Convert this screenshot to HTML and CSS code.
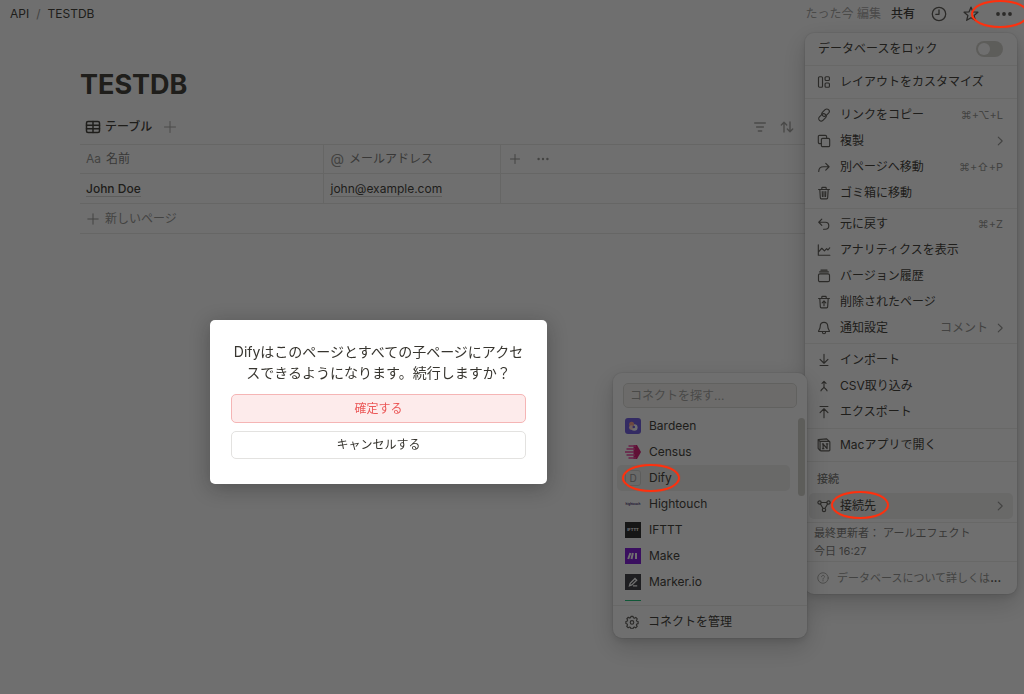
FILE: index.html
```html
<!DOCTYPE html>
<html lang="ja">
<head>
<meta charset="utf-8">
<meta name="viewport" content="width=device-width, initial-scale=1">
<title>TESTDB</title>
<link rel="stylesheet" href="styles.css">
</head>
<body>
<div class="app">
  <header class="topbar">
    <nav class="crumbs">
      <a href="#">API</a><span class="crumbs__sep">/</span><a href="#">TESTDB</a>
    </nav>
    <div class="topbar__actions">
      <span class="topbar__edited">たった今 編集</span>
      <button class="topbar__share">共有</button>
      <button class="icon-btn" aria-label="更新履歴"><svg class="icon" viewBox="0 0 16 16"><circle cx="8" cy="8" r="6.7"/><path d="M8 3.8V8.3H4.8"/></svg></button>
      <button class="icon-btn" aria-label="お気に入り"><svg class="icon" viewBox="0 0 16 16"><path d="M8 1.2l1.9 4.6 5 .4-3.8 3.2 1.2 4.9L8 11.7l-4.3 2.6 1.2-4.9L1.1 6.2l5-.4z"/></svg></button>
      <button class="icon-btn" aria-label="メニュー"><svg class="icon icon--wide" viewBox="0 0 18 16"><g class="solid"><circle cx="3" cy="8" r="1.9"/><circle cx="9" cy="8" r="1.9"/><circle cx="15" cy="8" r="1.9"/></g></svg></button>
    </div>
  </header>

  <main class="page">
    <h1 class="page__title">TESTDB</h1>
    <div class="views">
      <button class="views__tab"><svg class="icon icon--tab" viewBox="0 0 16 16"><rect x="1.5" y="2.5" width="13" height="11" rx="1.5"/><path d="M1.5 6.2h13M1.5 9.8h13M8 2.5v11"/></svg>テーブル</button>
      <button class="icon-btn faint" aria-label="ビューを追加"><svg class="icon icon--sm" viewBox="0 0 12 12"><path d="M6 .5v11M.5 6h11"/></svg></button>
      <div class="views__tools">
        <button class="icon-btn faint" aria-label="フィルター"><svg class="icon icon--sm" viewBox="0 0 12 12"><path class="bold" d="M.7 2h10.600M2.600 6h6.800M4.300 10h3.400"/></svg></button>
        <button class="icon-btn faint" aria-label="並べ替え"><svg class="icon icon--tool" viewBox="0 0 14 12"><path class="bold" d="M4 11V1.500M1.300 4L4 1.200 6.700 4M10 1v9.500M7.300 8L10 10.800 12.700 8"/></svg></button>
      </div>
    </div>
    <table class="db">
      <colgroup><col class="db__name"><col class="db__mail"><col></colgroup>
      <thead>
        <tr>
          <th><span class="cell"><span class="db__aa">Aa</span>名前</span></th>
          <th><span class="cell"><span class="db__at">@</span>メールアドレス</span></th>
          <th><span class="cell cell--tools">
            <button class="icon-btn" aria-label="列を追加"><svg class="icon icon--sm" viewBox="0 0 12 12"><path d="M6 1.500v9M1.500 6h9"/></svg></button>
            <button class="icon-btn" aria-label="その他"><svg class="icon icon--sm" viewBox="0 0 12 12"><g class="solid"><circle cx="1.600" cy="6" r="1.200"/><circle cx="6" cy="6" r="1.200"/><circle cx="10.400" cy="6" r="1.200"/></g></svg></button>
          </span></th>
        </tr>
      </thead>
      <tbody>
        <tr><td><a class="db__title" href="#">John Doe</a></td><td><a href="#">john@example.com</a></td><td></td></tr>
      </tbody>
    </table>
    <button class="new-row"><svg class="icon icon--sm" viewBox="0 0 12 12"><path d="M6 .8v10.400M.8 6h10.400"/></svg>新しいページ</button>
  </main>
</div>

<aside class="menu">
  <section class="menu__group">
    <label class="item item--switch">データベースをロック<input class="switch" type="checkbox" role="switch"></label>
  </section>
  <section class="menu__group">
    <button class="item"><svg class="icon" viewBox="0 0 16 16"><rect x="1.700" y="2" width="4.600" height="12" rx="1.200"/><rect x="9.200" y="2" width="5" height="4.300" rx="1.200"/><rect x="9.200" y="9.200" width="5" height="4.800" rx="1.200"/></svg>レイアウトをカスタマイズ</button>
  </section>
  <section class="menu__group menu__group--snug">
    <button class="item"><svg class="icon" viewBox="0 0 16 16"><rect x="7" y="0.500" width="5.600" height="9.600" rx="2.800" transform="rotate(45 9.800 5.300)"/><rect x="3.400" y="5.900" width="5.600" height="9.600" rx="2.800" transform="rotate(45 6.200 10.700)"/></svg>リンクをコピー<span class="item__hint">⌘+⌥+L</span></button>
    <button class="item"><svg class="icon" viewBox="0 0 16 16"><rect x="5" y="5" width="9.500" height="9.500" rx="1.500"/><path d="M5 11H3A1.500 1.500 0 0 1 1.500 9.500V3A1.500 1.500 0 0 1 3 1.500h6.500A1.500 1.500 0 0 1 11 3v2"/></svg>複製<svg class="icon item__chev" viewBox="0 0 16 16"><path d="M6 3.500L10.500 8 6 12.500"/></svg></button>
    <button class="item"><svg class="icon" viewBox="0 0 16 16"><path d="M2 13c0-3.500 2-5.300 5.500-5.300h6M10 3.800l3.800 3.900L10 11.600"/></svg>別ページへ移動<span class="item__hint">⌘+⇧+P</span></button>
    <button class="item"><svg class="icon" viewBox="0 0 16 16"><path d="M1.800 4h12.400M5.500 4V2.300q0-.8.8-.8h3.400q.8 0 .8.800V4M3.200 4l.6 9.500q0 1.200 1.200 1.200h6q1.200 0 1.200-1.200l.6-9.500M6 6.500l.2 5.500M8 6.500V12M10 6.500L9.800 12"/></svg>ゴミ箱に移動</button>
  </section>
  <section class="menu__group menu__group--tight">
    <button class="item"><svg class="icon" viewBox="0 0 16 16"><path d="M5.500 2.500L2 6l3.500 3.500M2 6h7.500a4 4 0 0 1 0 8H7.500"/></svg>元に戻す<span class="item__hint">⌘+Z</span></button>
    <button class="item"><svg class="icon" viewBox="0 0 16 16"><path d="M1.500 2v12h13.200M1.500 10.500L5.500 6l3 3 2.500-2.500 1.500 1.500 2-2.500"/></svg>アナリティクスを表示</button>
    <button class="item"><svg class="icon" viewBox="0 0 16 16"><rect x="1.700" y="5.500" width="12.600" height="9" rx="1.700"/><path d="M3 3.300h10M4.500 1.300h7"/></svg>バージョン履歴</button>
    <button class="item"><svg class="icon" viewBox="0 0 16 16"><path d="M1.800 4h12.400M5.500 4V2.300q0-.8.8-.8h3.400q.8 0 .8.800V4M3.200 4l.6 9.500q0 1.200 1.200 1.200h6q1.200 0 1.200-1.200l.6-9.500M8 12.300V7M5.900 8.900L8 6.800l2.100 2.100"/></svg>削除されたページ</button>
    <button class="item"><svg class="icon" viewBox="0 0 16 16"><path d="M8 1.500c-2.700 0-4.300 1.900-4.300 4.500C3.700 9.500 1.800 10.200 1.800 12h12.400c0-1.800-1.900-2.500-1.900-6 0-2.600-1.600-4.500-4.300-4.500zM6.200 12.500c0 2.700 3.600 2.700 3.600 0"/></svg>通知設定<span class="item__value">コメント</span><svg class="icon item__chev" viewBox="0 0 16 16"><path d="M6 3.500L10.500 8 6 12.500"/></svg></button>
  </section>
  <section class="menu__group">
    <button class="item"><svg class="icon" viewBox="0 0 16 16"><path d="M8 1.500v10M3.500 7.200L8 11.700l4.500-4.500M3.500 14.300h9"/></svg>インポート</button>
    <button class="item"><svg class="icon" viewBox="0 0 16 16"><path d="M8 9V3M5.700 5L8 2.700 10.300 5M4.500 13.500C5 11 8 11 8 8.500c0 2.500 3 2.500 3.500 5"/></svg>CSV取り込み</button>
    <button class="item"><svg class="icon" viewBox="0 0 16 16"><path d="M8 14.500v-10M3.500 8.800L8 4.300l4.500 4.500M3.500 1.700h9"/></svg>エクスポート</button>
  </section>
  <section class="menu__group">
    <button class="item"><svg class="icon" viewBox="0 0 16 16"><path d="M3.500 3.800h10.200q1 0 1 1v8.900q0 1-1 1H4.500q-1 0-1-1zM3.500 4L1.300 1.800v10L3.600 14.300M1.300 1.800l9.700-.8 3.200 3"/><path class="bold" d="M7 12V7l4.500 5V6.800M6.300 6.800h1M6.300 12.200h1.500M10.700 6.600h1.700"/></svg>Macアプリで開く</button>
  </section>
  <section class="menu__group menu__group--connect">
    <h2 class="menu__label">接続</h2>
    <button class="item item--active"><svg class="icon" viewBox="0 0 16 16"><circle cx="2.900" cy="4" r="1.900"/><circle cx="13.100" cy="4" r="1.900"/><circle cx="8" cy="12.500" r="1.900"/><path d="M4.800 4h6.400M3.900 5.700L7 10.800M12.100 5.700L9 10.800"/></svg>接続先<svg class="icon item__chev" viewBox="0 0 16 16"><path d="M6 3.500L10.500 8 6 12.500"/></svg></button>
  </section>
  <p class="menu__meta">最終更新者： アールエフェクト<br>今日 16:27</p>
  <a class="menu__help" href="#"><svg class="icon icon--sm" viewBox="0 0 16 16"><circle cx="8" cy="8" r="7"/><path d="M6 6.300c0-2.500 4-2.500 4 0C10 7.800 8 7.700 8 9.300M8 10.800v1.200"/></svg><span class="menu__help-text">データベースについて詳しくは</span><b>...</b></a>
</aside>

<aside class="picker">
  <input class="picker__search" type="text" placeholder="コネクトを探す..." aria-label="コネクトを探す">
  <div class="picker__list">
    <button class="app-item"><svg class="logo" viewBox="0 0 16 16"><rect width="16" height="16" rx="3" fill="#6a55e0"/><circle cx="9.300" cy="9.500" r="3.300" fill="#fff"/><circle cx="6.600" cy="6.300" r="2.500" fill="#f9a08c"/><circle cx="6.300" cy="9.600" r="2.300" fill="#ffd9cf"/><circle cx="8.800" cy="9" r="1.300" fill="#6a55e0"/></svg>Bardeen</button>
    <button class="app-item"><svg class="logo" viewBox="0 0 16 16"><path d="M8.500 1H12l4 7-4 7H8.500z" fill="#d8126f"/><path d="M3.500 2H11M1.500 5H10M0 8h9M1.500 11H10M3.500 14H11" stroke="#f0389a" stroke-width="1.700"/></svg>Census</button>
    <button class="app-item app-item--active"><span class="logo logo--letter">D</span>Dify</button>
    <button class="app-item"><span class="logo logo--word">hightouch</span>Hightouch</button>
    <button class="app-item"><span class="logo logo--ifttt">IFTTT</span>IFTTT</button>
    <button class="app-item"><svg class="logo" viewBox="0 0 16 16"><rect width="16" height="16" fill="#7a10d8"/><path d="M3.200 11l2.200-6M6.500 11l1.400-6M11 5v6" stroke="#fff" stroke-width="2"/></svg>Make</button>
    <button class="app-item"><svg class="logo" viewBox="0 0 16 16"><rect width="16" height="16" fill="#35363d"/><path d="M4.500 11.800l.7-2.500L10 4.500l1.700 1.700-4.800 4.700zM8 11.900h4.200" fill="none" stroke="#fff" stroke-width="1.300"/></svg>Marker.io</button>
    <button class="app-item" aria-label="次のコネクト"><span class="logo logo--green"></span></button>
  </div>
  <div class="picker__thumb"></div>
  <button class="picker__manage"><svg class="icon" viewBox="0 0 16 16"><path d="M6.800 1.500h2.400l.4 1.700 1.200.5 1.500-.9 1.700 1.700-.9 1.500.5 1.200 1.400.3v2.400l-1.500.4-.5 1.200.9 1.500-1.700 1.700-1.500-.9-1.200.5-.3 1.400H6.800l-.4-1.500-1.200-.5-1.500.9L2 12.900l.9-1.500-.5-1.200L1 9.800V7.400l1.500-.4L3 5.800l-.9-1.500 1.700-1.700 1.500.9 1.100-.5z"/><circle cx="8" cy="8.500" r="2"/></svg>コネクトを管理</button>
</aside>

<div class="scrim"></div>

<div class="dialog" role="dialog" aria-modal="true" aria-labelledby="dialog-text">
  <p class="dialog__text" id="dialog-text">Difyはこのページとすべての子ページにアクセスできるようになります。続行しますか？</p>
  <button class="dialog__btn dialog__btn--danger">確定する</button>
  <button class="dialog__btn">キャンセルする</button>
</div>

<div class="ring ring--more"></div>
<div class="ring ring--app"></div>
<div class="ring ring--connect"></div>
</body>
</html>
```
FILE: styles.css
```css
* { box-sizing: border-box; }

body {
  margin: 0;
  min-height: 100vh;
  position: relative;
  overflow: hidden;
  background: #fff;
  color: #37352f;
  font: 12px/18px Inter, "Noto Sans CJK JP", sans-serif;
}

button, input {
  font: inherit;
  color: inherit;
  border: 0;
  margin: 0;
  padding: 0;
  background: none;
}
button { display: flex; align-items: center; text-align: left; white-space: nowrap; }
a { color: inherit; text-decoration: none; }

.icon {
  width: 14px;
  height: 14px;
  flex: none;
  fill: none;
  stroke: currentColor;
  stroke-width: 1.3;
  stroke-linecap: round;
  stroke-linejoin: round;
}
.icon--sm { width: 12px; height: 12px; stroke-width: 1; }
.icon--tool { width: 14px; height: 12px; }
.icon--tab { width: 16px; height: 16px; stroke-width: 1.5; }
.icon--wide { width: 18px; height: 16px; }
.icon .solid { fill: currentColor; stroke: none; }
.icon .bold { stroke-width: 1.4; }
.faint { color: #a3a29f; }

/* Top bar */
.topbar { display: flex; justify-content: space-between; align-items: center; height: 27px; padding: 0 11px 0 10px; }
.crumbs { display: flex; gap: 7px; }
.crumbs__sep { color: #91918e; }
.topbar__actions { display: flex; align-items: center; gap: 16px; }
.topbar__edited { color: #a3a29f; margin-right: -6px; }
.topbar__share { font-weight: 500; }
.topbar .icon { color: #55534e; }
.topbar .icon:not(.icon--wide) { width: 16px; height: 16px; }

/* Database page */
.page { padding: 38px 80px 0; }
.page__title { margin: 0; font-size: 27px; line-height: 40px; font-weight: 700; }
.views { display: flex; align-items: center; gap: 12px; height: 39px; padding: 4px 150px 0 5px; }
.views__tab { gap: 4px; font-weight: 500; }
.views__tools { display: flex; gap: 14px; margin-left: auto; }

.db { width: 100%; border-collapse: collapse; table-layout: fixed; border-top: 1px solid #e9e9e7; }
.db__name { width: 243px; }
.db__mail { width: 177px; }
.db th, .db td { height: 29px; padding: 0 7px; text-align: left; border-bottom: 1px solid #e9e9e7; border-right: 1px solid #e9e9e7; }
.db td { height: 30px; }
.db th:first-child, .db td:first-child { padding-left: 6px; }
.db th:last-child, .db td:last-child { border-right: 0; }
.db th { font-weight: 400; color: #787774; }
.db a { border-bottom: 1px solid #d3d3d0; }
.db .db__title { font-weight: 500; }
.cell { display: flex; align-items: center; gap: 5px; }
.cell--tools { gap: 16px; padding-left: 1px; color: #91918e; }
.db__aa { color: #91918e; }
.db__at { color: #91918e; font-size: 14px; }
.new-row { width: 100%; height: 30px; gap: 6px; padding-left: 7px; color: #91918e; border-bottom: 1px solid #e9e9e7; }

/* Page menu */
.menu, .picker {
  position: absolute;
  background: #fff;
  border-radius: 9px;
  box-shadow: 0 0 0 1px rgba(15, 15, 15, .05), 0 3px 6px rgba(15, 15, 15, .1), 0 9px 24px rgba(15, 15, 15, .2);
}
.menu { top: 33px; right: 7px; width: 212px; }
.menu__group { padding: 3px 4px; border-bottom: 1px solid #ededeb; }
.menu__group--snug { padding-block: 3px 2px; }
.menu__group--tight { padding-block: 2px; }
.menu .item > .icon:first-child, .picker__manage .icon { color: #55534e; }
.item { display: flex; align-items: center; width: 100%; height: 26px; gap: 9px; padding: 0 10px 0 8px; border-radius: 5px; }
.item--switch { justify-content: space-between; padding-left: 9px; }
.item--active { background: #efefee; }
.item__hint, .item__value { margin-left: auto; color: #91918e; }
.item__hint { font-size: 11px; }
.item__chev { margin-left: auto; margin-right: -4px; color: #91918e; }
.item__value + .item__chev { margin-left: -4px; }
.switch { appearance: none; width: 27px; height: 16px; border-radius: 8px; background: #d3d1cb; display: flex; padding: 2px; }
.switch::before { content: ""; width: 12px; height: 12px; border-radius: 50%; background: #fff; }
.menu__group--connect { padding-top: 8px; }
.menu__label { margin: 0 0 5px; padding-left: 8px; font-size: 11px; line-height: 18px; font-weight: 500; color: #787774; }
.menu__meta { margin: 0; padding: 1px 9px; font-size: 11px; line-height: 18px; color: #787774; border-bottom: 1px solid #ededeb; }
.menu__help { display: flex; align-items: center; gap: 8px; height: 32px; padding: 0 12px; font-size: 11px; white-space: nowrap; }
.menu__help .icon, .menu__help-text { color: #91918e; }
.menu__help b { margin-left: -8px; }

/* Connection picker */
.picker { top: 373px; right: 217px; width: 194px; overflow: hidden; }
.picker__search { display: block; width: calc(100% - 20px); height: 25px; margin: 10px 10px 5px; padding: 0 6px; border: 1px solid #dddcd8; border-radius: 5px; background: #f7f6f3; }
.picker__search::placeholder { color: #a3a29f; opacity: 1; }
.picker__list { height: 188px; margin: 0 17px 4px 4px; overflow: hidden; }
.app-item { width: 100%; height: 26px; gap: 8px; padding-left: 8px; border-radius: 5px; }
.app-item--active { background: #efefee; }
.logo { width: 16px; height: 16px; flex: none; display: flex; align-items: center; justify-content: center; }
.logo--letter { border: 1px solid #d3d3d0; border-radius: 3px; color: #91918e; font-size: 10px; }
.logo--word { color: #3b2a6b; font-size: 3px; font-weight: 700; }
.logo--ifttt { background: #222; color: #fff; font-size: 4px; font-weight: 800; }
.logo--green { background: #12c274; }
.picker__thumb { position: absolute; top: 45px; right: 2px; width: 7px; height: 78px; border-radius: 4px; background: #d3d1cb; }
.picker__manage { width: 100%; height: 33px; gap: 9px; padding-left: 12px; border-top: 1px solid #ededeb; }

/* Modal */
.scrim { position: fixed; inset: 0; background: rgba(15, 15, 15, .6); }
.dialog {
  position: absolute;
  top: 320px;
  left: 210px;
  width: 337px;
  padding: 21px 21px 25px;
  border-radius: 5px;
  background: #fff;
  box-shadow: 0 4px 20px rgba(15, 15, 15, .3);
}
.dialog__text { margin: 0 0 11px; font-size: 14px; line-height: 21px; text-align: center; }
.dialog__btn { width: 100%; height: 28px; justify-content: center; border: 1px solid #e3e2e0; border-radius: 5px; }
.dialog__btn--danger { height: 29px; margin-bottom: 8px; border-color: #f5b5b5; background: #fdebeb; color: #eb5757; }

/* Hand-drawn highlights */
.ring { position: absolute; width: 58px; height: 28px; border: 2px solid #ff300d; border-radius: 50%; box-shadow: 0 0 1px #ff300d; }
.ring--more { top: 0; right: -5px; }
.ring--app { top: 464px; right: 344px; }
.ring--connect { top: 491px; right: 135px; }
```
